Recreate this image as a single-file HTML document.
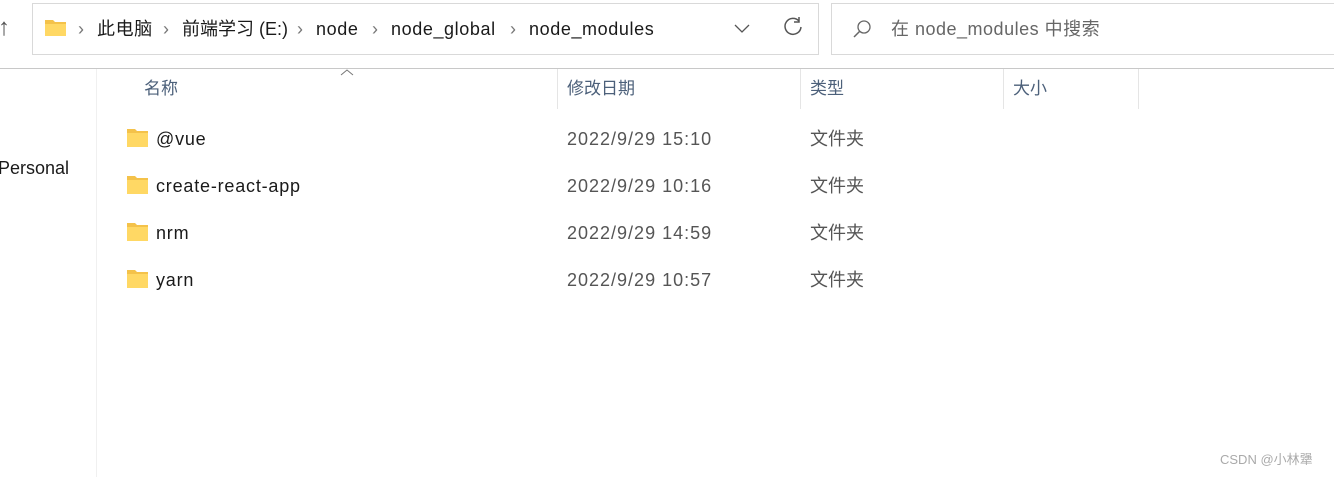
<!DOCTYPE html>
<html><head><meta charset="utf-8"><style>
body{margin:0;width:1334px;height:477px;background:#fff;position:relative;overflow:hidden;font-family:"Liberation Sans","Noto Sans CJK SC",sans-serif;color:#1a1a1a}
.a{position:absolute;white-space:nowrap;line-height:22px}
.box{position:absolute;border:1px solid #d9d9d9;background:#fff}
.hd{color:#4c607a;font-size:17px}
.sep{position:absolute;top:69px;width:1px;height:40px;background:#e5e5e5}
.r{font-size:18px;letter-spacing:0.8px}
.g{color:#555;font-size:18px}
.d{color:#555;font-size:18px;letter-spacing:1px}
.bc{font-size:18px;letter-spacing:0.6px}
.ch{font-size:18px;color:#777}
</style></head><body>
<div class="a" style="left:-2px;top:17px;font-size:24px;color:#555">↑</div>
<div class="box" style="left:32px;top:3px;width:785px;height:50px"></div>
<div class="box" style="left:831px;top:3px;width:510px;height:50px"></div>
<svg class="a" style="left:45px;top:19px" width="22" height="17"><path d="M0 1h8l2 2h11v14H0z" fill="#f4c24a"/><path d="M0 5h21v12H0z" fill="#ffd864"/></svg>
<span class="a ch" style="left:78px;top:18px">›</span><span class="a bc" style="left:97px;top:18px">此电脑</span>
<span class="a ch" style="left:163px;top:18px">›</span><span class="a bc" style="left:182px;top:18px;letter-spacing:0">前端学习 (E:)</span>
<span class="a ch" style="left:297px;top:18px">›</span><span class="a bc" style="left:316px;top:18px">node</span>
<span class="a ch" style="left:372px;top:18px">›</span><span class="a bc" style="left:391px;top:18px">node_global</span>
<span class="a ch" style="left:510px;top:18px">›</span><span class="a bc" style="left:529px;top:18px">node_modules</span>
<svg class="a" style="left:733px;top:22px" width="18" height="12"><path d="M2 3l7 7 7-7" fill="none" stroke="#555" stroke-width="1.3"/></svg>
<svg class="a" style="left:782px;top:16px" width="22" height="22"><path d="M17 5A8 8 0 1 0 19 11" fill="none" stroke="#555" stroke-width="1.5"/><path d="M17 1v5h-5" fill="none" stroke="#555" stroke-width="1.5"/></svg>
<svg class="a" style="left:852px;top:19px" width="20" height="20"><circle cx="12" cy="8" r="6" fill="none" stroke="#666" stroke-width="1.3"/><path d="M8 12l-6 6" stroke="#666" stroke-width="1.5"/></svg>
<div class="a" style="left:891px;top:18px;font-size:18px;color:#666;letter-spacing:0.5px">在 node_modules 中搜索</div>
<div class="a" style="left:0;top:68px;width:1334px;height:1px;background:#c8c8c8"></div>
<div class="a" style="left:96px;top:69px;width:1px;height:408px;background:#f0f0f0"></div>
<div class="a" style="left:-2px;top:157px;font-size:18px">Personal</div>
<svg class="a" style="left:340px;top:68px" width="14" height="8"><path d="M1 7l6-5 6 5" fill="none" stroke="#777"/></svg>
<div class="a hd" style="left:144px;top:78px">名称</div>
<div class="sep" style="left:557px"></div><div class="a hd" style="left:567px;top:78px">修改日期</div>
<div class="sep" style="left:800px"></div><div class="a hd" style="left:810px;top:78px">类型</div>
<div class="sep" style="left:1003px"></div><div class="a hd" style="left:1013px;top:78px">大小</div>
<div class="sep" style="left:1138px"></div>
<svg width="0" height="0"><defs><g id="f"><path d="M0 0h8l2 2h11v16H0z" fill="#f4c24a"/><path d="M0 4h21v14H0z" fill="#ffd864"/></g></defs></svg>
<svg class="a" style="left:127px;top:129px" width="22" height="18"><use href="#f"/></svg>
<svg class="a" style="left:127px;top:176px" width="22" height="18"><use href="#f"/></svg>
<svg class="a" style="left:127px;top:223px" width="22" height="18"><use href="#f"/></svg>
<svg class="a" style="left:127px;top:270px" width="22" height="18"><use href="#f"/></svg>
<div class="a r" style="left:156px;top:128px">@vue</div><div class="a d" style="left:567px;top:128px">2022/9/29 15:10</div><div class="a g" style="left:810px;top:128px">文件夹</div>
<div class="a r" style="left:156px;top:175px">create-react-app</div><div class="a d" style="left:567px;top:175px">2022/9/29 10:16</div><div class="a g" style="left:810px;top:175px">文件夹</div>
<div class="a r" style="left:156px;top:222px">nrm</div><div class="a d" style="left:567px;top:222px">2022/9/29 14:59</div><div class="a g" style="left:810px;top:222px">文件夹</div>
<div class="a r" style="left:156px;top:269px">yarn</div><div class="a d" style="left:567px;top:269px">2022/9/29 10:57</div><div class="a g" style="left:810px;top:269px">文件夹</div>
<div class="a" style="left:1220px;top:449px;font-size:13px;color:#aaa">CSDN @小林犟</div>
</body></html>
